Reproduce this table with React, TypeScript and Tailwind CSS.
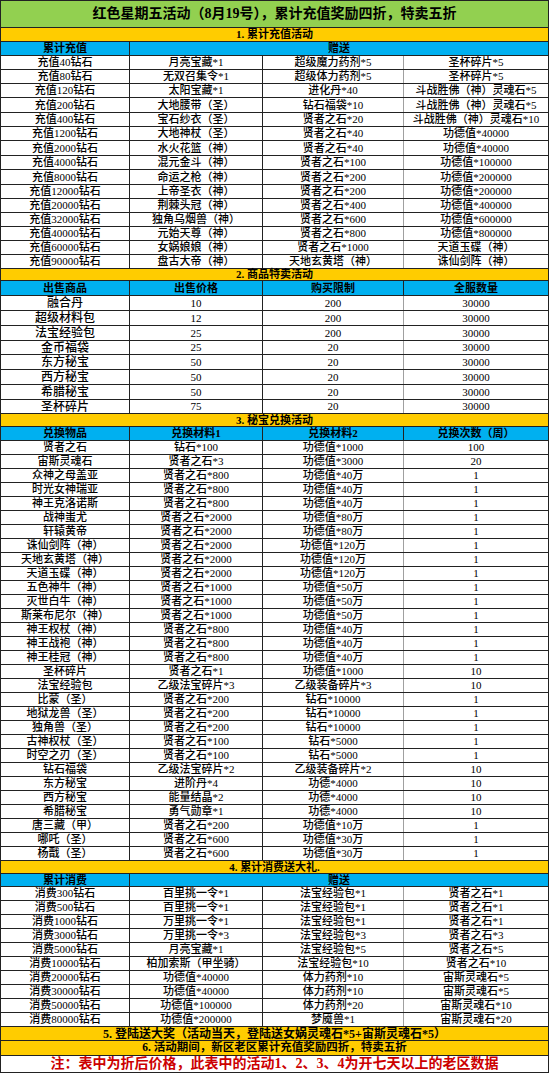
import React from "react";

const H: Record<number, string> = {
  12: "h-[12px]",
  13: "h-[13px]",
  14: "h-[14px]",
  15: "h-[15px]",
  17: "h-[17px]",
  28: "h-[28px]",
};

const FONT = { fontFamily: '"Liberation Serif", "Noto Sans CJK SC", serif' };

const W = ["w-[129px] shrink-0", "w-[133px] shrink-0", "w-[141px] shrink-0", "flex-1 min-w-0"];

function Cell({
  i,
  children,
  gray,
  big,
  bold,
}: {
  i: number;
  children: React.ReactNode;
  gray?: boolean;
  big?: boolean;
  bold?: boolean;
}) {
  const border =
    i === 3 ? "" : i === 2 && gray ? "border-r border-[#a0a0a0]" : "border-r border-[#222]";
  return (
    <div
      className={`${W[i]} ${border} flex items-center justify-center overflow-hidden whitespace-nowrap leading-none ${
        big ? "text-[12px]" : "text-[11px]"
      } ${bold ? "font-bold" : "font-medium"} text-black`}
    >
      {children}
    </div>
  );
}

function Row({ h, className = "", children }: { h: number; className?: string; children: React.ReactNode }) {
  return <div className={`flex ${H[h]} border-b border-[#222] ${className}`}>{children}</div>;
}

function Section({ h, text, size = "text-[11px]" }: { h: number; text: string; size?: string }) {
  return (
    <Row h={h} className="bg-[#FFCC00]">
      <div className={`flex-1 flex items-center justify-center leading-none font-bold text-black whitespace-nowrap ${size}`}>
        {text}
      </div>
    </Row>
  );
}

function HeadSpan({ h, first, rest }: { h: number; first: string; rest: string }) {
  return (
    <Row h={h} className="bg-[#00B0F0]">
      <Cell i={0} bold>
        {first}
      </Cell>
      <div className="flex-1 flex items-center justify-center leading-none text-[11px] font-bold text-black">{rest}</div>
    </Row>
  );
}

function Head4({ h, cols }: { h: number; cols: string[] }) {
  return (
    <Row h={h} className="bg-[#00B0F0]">
      {cols.map((c, i) => (
        <Cell key={i} i={i} bold>
          {c}
        </Cell>
      ))}
    </Row>
  );
}

function DataRows({ rows, heights, bigFirst }: { rows: string[][]; heights: number[]; bigFirst?: boolean }) {
  return (
    <>
      {rows.map((r, ri) => (
        <Row key={ri} h={heights[ri] ?? 14} className="bg-white">
          {r.map((c, i) => (
            <Cell key={i} i={i} gray big={bigFirst && i === 0}>
              {c}
            </Cell>
          ))}
        </Row>
      ))}
    </>
  );
}

const sec1 = [
  ["充值40钻石", "月亮宝藏*1", "超级魔力药剂*5", "圣杯碎片*5"],
  ["充值80钻石", "无双召集令*1", "超级体力药剂*5", "圣杯碎片*5"],
  ["充值120钻石", "太阳宝藏*1", "进化丹*40", "斗战胜佛（神）灵魂石*5"],
  ["充值200钻石", "大地腰带（圣）", "钻石福袋*10", "斗战胜佛（神）灵魂石*5"],
  ["充值400钻石", "宝石纱衣（圣）", "贤者之石*20", "斗战胜佛（神）灵魂石*10"],
  ["充值1200钻石", "大地神杖（圣）", "贤者之石*40", "功德值*40000"],
  ["充值2000钻石", "水火花篮（神）", "贤者之石*40", "功德值*40000"],
  ["充值4000钻石", "混元金斗（神）", "贤者之石*100", "功德值*100000"],
  ["充值8000钻石", "命运之枪（神）", "贤者之石*200", "功德值*200000"],
  ["充值12000钻石", "上帝圣衣（神）", "贤者之石*200", "功德值*200000"],
  ["充值20000钻石", "荆棘头冠（神）", "贤者之石*400", "功德值*400000"],
  ["充值32000钻石", "独角乌烟兽（神）", "贤者之石*600", "功德值*600000"],
  ["充值40000钻石", "元始天尊（神）", "贤者之石*800", "功德值*800000"],
  ["充值60000钻石", "女娲娘娘（神）", "贤者之石*1000", "天道玉碟（神）"],
  ["充值90000钻石", "盘古大帝（神）", "天地玄黄塔（神）", "诛仙剑阵（神）"],
];
const sec1H = [14, 14, 14, 15, 14, 14, 15, 14, 15, 14, 14, 14, 14, 14, 14];

const sec2 = [
  ["融合丹", "10", "200", "30000"],
  ["超级材料包", "12", "200", "30000"],
  ["法宝经验包", "25", "200", "30000"],
  ["金币福袋", "25", "20", "30000"],
  ["东方秘宝", "50", "20", "30000"],
  ["西方秘宝", "50", "20", "30000"],
  ["希腊秘宝", "50", "20", "30000"],
  ["圣杯碎片", "75", "20", "30000"],
];
const sec2H = [15, 15, 15, 14, 15, 15, 15, 14];

const sec3 = [
  ["贤者之石", "钻石*100", "功德值*1000", "100"],
  ["宙斯灵魂石", "贤者之石*3", "功德值*3000", "20"],
  ["众神之母盖亚", "贤者之石*800", "功德值*40万", "1"],
  ["时光女神瑞亚", "贤者之石*800", "功德值*40万", "1"],
  ["神王克洛诺斯", "贤者之石*800", "功德值*40万", "1"],
  ["战神蚩尤", "贤者之石*2000", "功德值*80万", "1"],
  ["轩辕黄帝", "贤者之石*2000", "功德值*80万", "1"],
  ["诛仙剑阵（神）", "贤者之石*2000", "功德值*120万", "1"],
  ["天地玄黄塔（神）", "贤者之石*2000", "功德值*120万", "1"],
  ["天道玉碟（神）", "贤者之石*2000", "功德值*120万", "1"],
  ["五色神牛（神）", "贤者之石*1000", "功德值*50万", "1"],
  ["灭世白牛（神）", "贤者之石*1000", "功德值*50万", "1"],
  ["斯莱布尼尔（神）", "贤者之石*1000", "功德值*50万", "1"],
  ["神王权杖（神）", "贤者之石*800", "功德值*40万", "1"],
  ["神王战袍（神）", "贤者之石*800", "功德值*40万", "1"],
  ["神王桂冠（神）", "贤者之石*800", "功德值*40万", "1"],
  ["圣杯碎片", "贤者之石*1", "功德值*1000", "10"],
  ["法宝经验包", "乙级法宝碎片*3", "乙级装备碎片*3", "10"],
  ["比蒙（圣）", "贤者之石*200", "钻石*10000", "1"],
  ["地狱龙兽（圣）", "贤者之石*200", "钻石*10000", "1"],
  ["独角兽（圣）", "贤者之石*200", "钻石*10000", "1"],
  ["古神权杖（圣）", "贤者之石*100", "钻石*5000", "1"],
  ["时空之刃（圣）", "贤者之石*100", "钻石*5000", "1"],
  ["钻石福袋", "乙级法宝碎片*2", "乙级装备碎片*2", "10"],
  ["东方秘宝", "进阶丹*4", "功德*4000", "10"],
  ["西方秘宝", "能量结晶*2", "功德*4000", "10"],
  ["希腊秘宝", "勇气勋章*1", "功德*4000", "10"],
  ["唐三藏（甲）", "贤者之石*200", "功德值*10万", "1"],
  ["哪吒（圣）", "贤者之石*600", "功德值*30万", "1"],
  ["杨戬（圣）", "贤者之石*600", "功德值*30万", "1"],
];

const sec4 = [
  ["消费300钻石", "百里挑一令*1", "法宝经验包*1", "贤者之石*1"],
  ["消费500钻石", "百里挑一令*1", "法宝经验包*1", "贤者之石*1"],
  ["消费1000钻石", "万里挑一令*1", "法宝经验包*1", "贤者之石*1"],
  ["消费3000钻石", "万里挑一令*3", "法宝经验包*3", "贤者之石*3"],
  ["消费5000钻石", "月亮宝藏*1", "法宝经验包*5", "贤者之石*5"],
  ["消费10000钻石", "柏加索斯（甲坐骑）", "法宝经验包*10", "贤者之石*10"],
  ["消费20000钻石", "功德值*40000", "体力药剂*10", "宙斯灵魂石*5"],
  ["消费30000钻石", "功德值*40000", "体力药剂*10", "宙斯灵魂石*5"],
  ["消费50000钻石", "功德值*100000", "体力药剂*20", "宙斯灵魂石*10"],
  ["消费80000钻石", "功德值*200000", "梦魇兽*1", "宙斯灵魂石*20"],
];

export default function App() {
  return (
    <div className="w-[550px] h-[1073px] bg-white overflow-hidden" style={FONT}>
      <div className="w-[549px] border-l border-r border-[#222]">
        <div className="flex h-[28px] border-t border-b border-[#222] bg-[#92D050] items-center justify-center text-[14px] font-bold text-black whitespace-nowrap leading-none">
          红色星期五活动（8月19号），累计充值奖励四折，特卖五折
        </div>

        <Section h={14} text="1. 累计充值活动" />
        <HeadSpan h={14} first="累计充值" rest="赠送" />
        <DataRows rows={sec1} heights={sec1H} />

        <Section h={12} text="2. 商品特卖活动" />
        <Head4 h={15} cols={["出售商品", "出售价格", "购买限制", "全服数量"]} />
        <DataRows rows={sec2} heights={sec2H} bigFirst />

        <Section h={13} text="3. 秘宝兑换活动" />
        <Head4 h={14} cols={["兑换物品", "兑换材料1", "兑换材料2", "兑换次数（周）"]} />
        <DataRows rows={sec3} heights={[]} />

        <Section h={13} text="4. 累计消费送大礼." />
        <HeadSpan h={13} first="累计消费" rest="赠送" />
        <DataRows rows={sec4} heights={[]} />

        <Section h={14} text="5. 登陆送大奖（活动当天，登陆送女娲灵魂石*5+宙斯灵魂石*5）" size="text-[12px]" />
        <Section h={15} text="6. 活动期间，新区老区累计充值奖励四折，特卖五折" size="text-[11.5px]" />
        <div className="flex h-[17px] border-b border-[#222] bg-white items-center justify-center text-[14px] font-bold text-[#CC0000] whitespace-nowrap leading-none">
          注：表中为折后价格，此表中的活动1、2、3、4为开七天以上的老区数据
        </div>
      </div>
    </div>
  );
}
